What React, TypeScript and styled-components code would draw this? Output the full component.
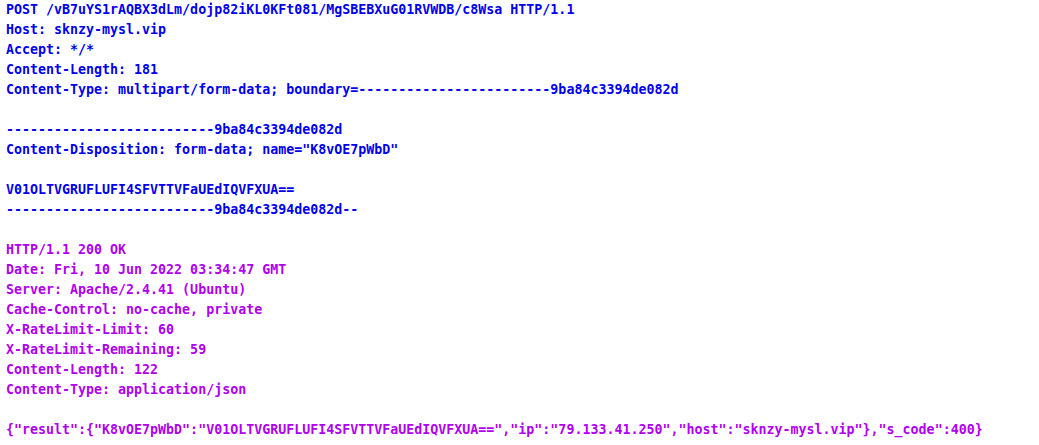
import React from "react";
import styled, { createGlobalStyle } from "styled-components";

const Global = createGlobalStyle`
  html, body { margin: 0; padding: 0; background: #ffffff; }
  #root { width: 1039px; height: 445px; overflow: hidden; }
`;

const Stream = styled.div`
  display: flex;
  flex-direction: column;
  padding: 0 0 0 6px;
  font-family: "DejaVu Sans Mono", "Liberation Mono", monospace;
  font-size: 13.3px;
  font-weight: bold;
  letter-spacing: 0;
  white-space: pre;
`;

const Line = styled.div<{ $dir: "req" | "res" }>`
  height: 20px;
  line-height: 20px;
  color: ${(p) => (p.$dir === "req" ? "#0000ee" : "#b000f0")};
`;

const request = [
  "POST /vB7uYS1rAQBX3dLm/dojp82iKL0KFt081/MgSBEBXuG01RVWDB/c8Wsa HTTP/1.1",
  "Host: sknzy-mysl.vip",
  "Accept: */*",
  "Content-Length: 181",
  "Content-Type: multipart/form-data; boundary=------------------------9ba84c3394de082d",
  "",
  "--------------------------9ba84c3394de082d",
  'Content-Disposition: form-data; name="K8vOE7pWbD"',
  "",
  "V01OLTVGRUFLUFI4SFVTTVFaUEdIQVFXUA==",
  "--------------------------9ba84c3394de082d--",
  "",
];

const response = [
  "HTTP/1.1 200 OK",
  "Date: Fri, 10 Jun 2022 03:34:47 GMT",
  "Server: Apache/2.4.41 (Ubuntu)",
  "Cache-Control: no-cache, private",
  "X-RateLimit-Limit: 60",
  "X-RateLimit-Remaining: 59",
  "Content-Length: 122",
  "Content-Type: application/json",
  "",
  '{"result":{"K8vOE7pWbD":"V01OLTVGRUFLUFI4SFVTTVFaUEdIQVFXUA==","ip":"79.133.41.250","host":"sknzy-mysl.vip"},"s_code":400}',
];

export default function App() {
  return (
    <>
      <Global />
      <Stream>
        {request.map((t, i) => (
          <Line key={"q" + i} $dir="req">{t || " "}</Line>
        ))}
        {response.map((t, i) => (
          <Line key={"s" + i} $dir="res">{t || " "}</Line>
        ))}
      </Stream>
    </>
  );
}
